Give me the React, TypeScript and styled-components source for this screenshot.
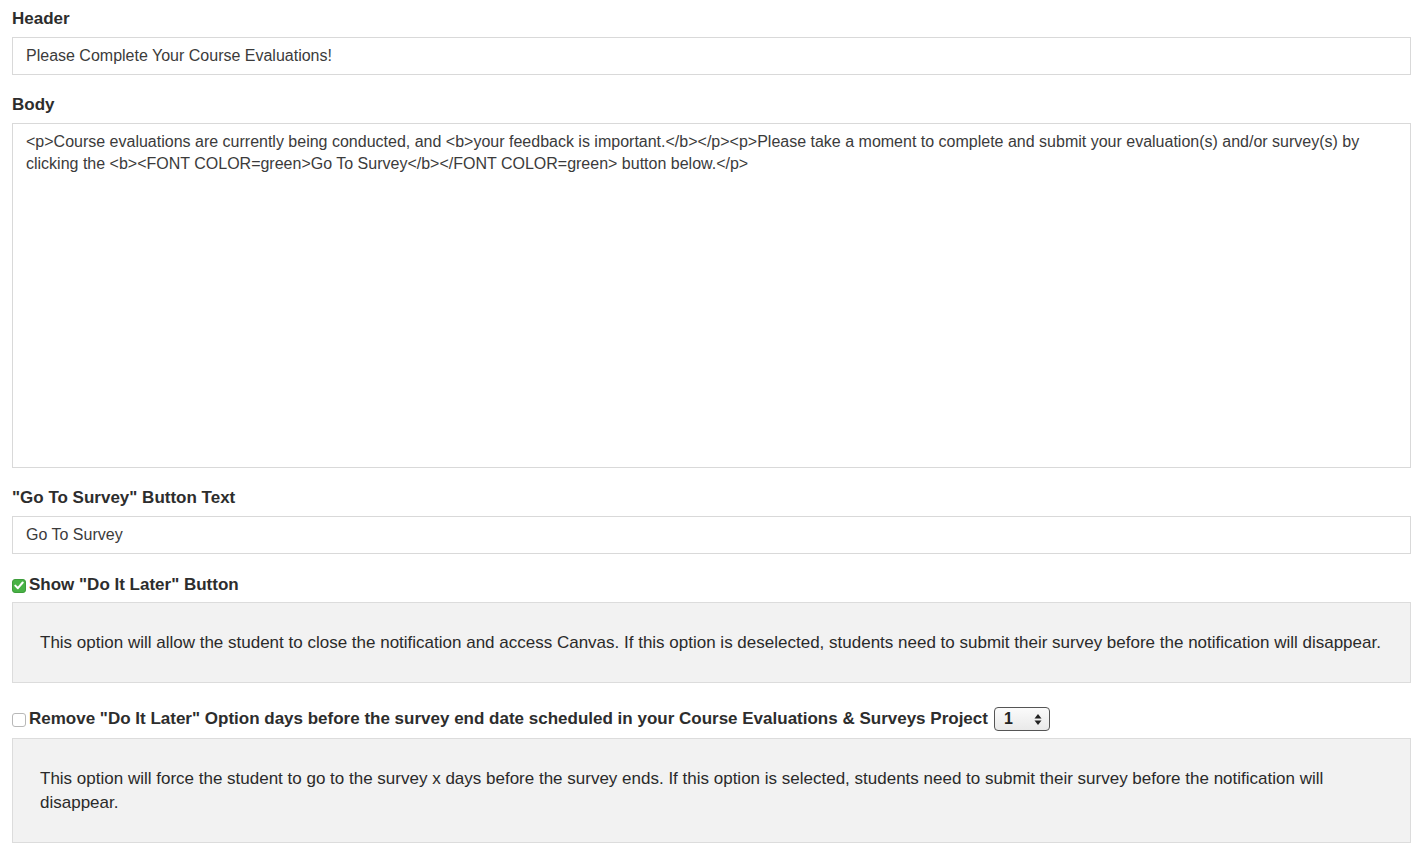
import styled, { createGlobalStyle } from "styled-components";

const GlobalStyle = createGlobalStyle`
  body {
    margin: 0;
    background: #fff;
    font-family: "Liberation Sans", Arial, sans-serif;
    color: #333;
  }
`;

const Form = styled.div`
  padding: 9px 14px 0 12px;
`;

const Field = styled.div`
  margin-bottom: 20px;
`;

const Label = styled.label`
  display: block;
  font-size: 17px;
  font-weight: bold;
  line-height: 20px;
  color: #2d2d2d;
  margin-bottom: 8px;
`;

const TextInput = styled.input`
  display: block;
  box-sizing: border-box;
  width: 100%;
  height: 38px;
  padding: 0 13px;
  border: 1px solid #d9d9d9;
  font-family: "Liberation Sans", Arial, sans-serif;
  font-size: 16px;
  color: #3b3b3b;
  outline: none;
`;

const TextArea = styled.textarea`
  display: block;
  box-sizing: border-box;
  width: 100%;
  height: 345px;
  padding: 7px 13px;
  border: 1px solid #d9d9d9;
  font-family: "Liberation Sans", Arial, sans-serif;
  font-size: 16px;
  line-height: 22px;
  color: #3b3b3b;
  resize: none;
  outline: none;
`;

const OptionRow = styled.div<{ $h: number; $gap: number }>`
  display: flex;
  align-items: center;
  gap: 3px;
  height: ${(p) => p.$h}px;
  margin-bottom: ${(p) => p.$gap}px;
  font-size: 17px;
  font-weight: bold;
  color: #2d2d2d;
`;

const Check = styled.span<{ $checked: boolean }>`
  box-sizing: border-box;
  flex: none;
  width: 14px;
  height: 14px;
  border-radius: 3px;
  display: inline-flex;
  align-items: center;
  justify-content: center;
  margin-top: 1px;
  background: ${(p) => (p.$checked ? "#48b245" : "#fff")};
  border: 1px solid ${(p) => (p.$checked ? "#3e9d3b" : "#b8b8b8")};
`;

const Select = styled.div`
  box-sizing: border-box;
  display: inline-flex;
  align-items: center;
  justify-content: space-between;
  width: 56px;
  height: 24px;
  margin-left: 3px;
  padding: 0 7px 0 9px;
  border: 1px solid #555;
  border-radius: 4px;
  background: linear-gradient(#fbfbfb, #e9e9e9);
  font-size: 16px;
  font-weight: bold;
  color: #222;
`;

const Note = styled.div`
  box-sizing: border-box;
  background: #f2f2f2;
  border: 1px solid #dcdcdc;
  padding: 28px 28px 27px 27px;
  font-size: 17px;
  line-height: 24px;
  color: #2a2a2a;
  margin-bottom: 24px;
`;

const bodyText =
  "<p>Course evaluations are currently being conducted, and <b>your feedback is important.</b></p><p>Please take a moment to complete and submit your evaluation(s) and/or survey(s) by clicking the <b><FONT COLOR=green>Go To Survey</b></FONT COLOR=green> button below.</p>";

function CheckMark() {
  return (
    <svg width="10" height="9" viewBox="0 0 10 9">
      <path d="M1.3 4.6 L3.9 7.2 L8.7 1.5" fill="none" stroke="#fff" strokeWidth="2" strokeLinecap="round" strokeLinejoin="round" />
    </svg>
  );
}

function Arrows() {
  return (
    <svg width="8" height="13" viewBox="0 0 8 13">
      <path d="M4 1 L7.5 5.5 H0.5 Z" fill="#222" />
      <path d="M4 12 L7.5 7.5 H0.5 Z" fill="#222" />
    </svg>
  );
}

export default function App() {
  return (
    <>
      <GlobalStyle />
      <Form>
        <Field>
          <Label>Header</Label>
          <TextInput defaultValue="Please Complete Your Course Evaluations!" />
        </Field>
        <Field>
          <Label>Body</Label>
          <TextArea defaultValue={bodyText} />
        </Field>
        <Field>
          <Label>"Go To Survey" Button Text</Label>
          <TextInput defaultValue="Go To Survey" />
        </Field>
        <OptionRow $h={22} $gap={6}>
          <Check $checked>
            <CheckMark />
          </Check>
          Show "Do It Later" Button
        </OptionRow>
        <Note>
          This option will allow the student to close the notification and access Canvas. If this option is
          deselected, students need to submit their survey before the notification will disappear.
        </Note>
        <OptionRow $h={24} $gap={7}>
          <Check $checked={false} />
          Remove "Do It Later" Option days before the survey end date scheduled in your Course Evaluations &amp;
          Surveys Project
          <Select>
            1
            <Arrows />
          </Select>
        </OptionRow>
        <Note>
          This option will force the student to go to the survey x days before the survey ends. If this option is
          selected, students need to submit their survey before the notification will disappear.
        </Note>
      </Form>
    </>
  );
}
